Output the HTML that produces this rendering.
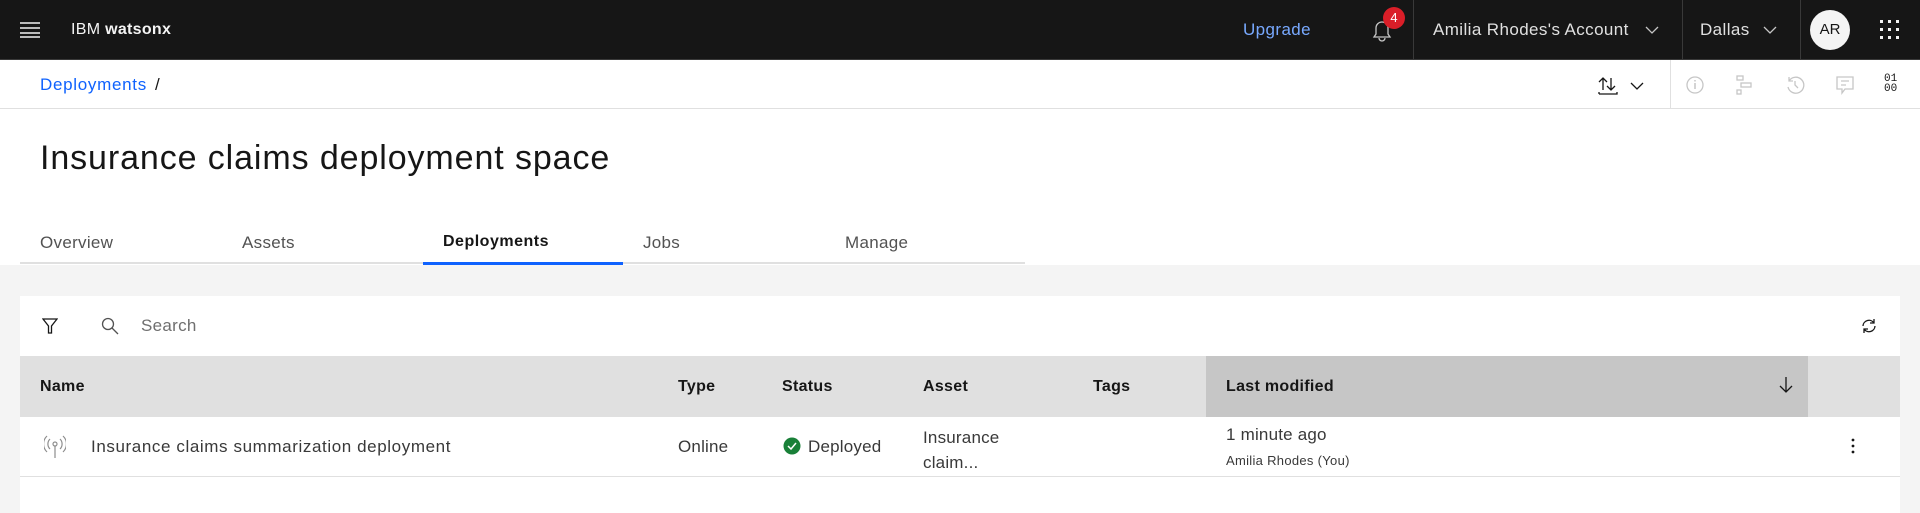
<!DOCTYPE html>
<html><head><meta charset="utf-8"><style>
*{box-sizing:border-box;margin:0;padding:0}
body{width:1920px;height:513px;overflow:hidden;background:#fff;font-family:"Liberation Sans",sans-serif;color:#161616;position:relative;letter-spacing:0.5px}
.a{position:absolute}
.top{left:0;top:0;width:1920px;height:60px;background:#161616;border-bottom:1px solid #393939}
.wt{color:#f4f4f4;font-size:16px}
.sep{width:1px;height:60px;background:#393939;top:0}
.hd{font-weight:bold;font-size:16px;top:378px;letter-spacing:0.3px}
.t{font-size:17px}
</style></head><body>
<div class="a top"></div>
<svg class="a" style="left:20px;top:20px" width="20" height="20" viewBox="0 0 20 20"><g stroke="#f4f4f4" stroke-width="1.5"><line x1="0" y1="3" x2="20" y2="3"/><line x1="0" y1="8" x2="20" y2="8"/><line x1="0" y1="13" x2="20" y2="13"/><line x1="0" y1="17" x2="20" y2="17"/></g></svg>
<div class="a wt" style="left:71px;top:21px;letter-spacing:0.3px">IBM <b>watsonx</b></div>
<div class="a" style="left:1243px;top:20px;color:#78a9ff;font-size:17px;letter-spacing:0.4px">Upgrade</div>
<svg class="a" style="left:1370px;top:18px" width="24" height="26" viewBox="0 0 24 26"><path d="M4 19 L6 16 V10 a6 6 0 0 1 12 0 V16 L20 19 Z M9 20 a3 3 0 0 0 6 0" fill="none" stroke="#c6c6c6" stroke-width="1.3"/></svg>
<div class="a" style="left:1383px;top:7px;width:22px;height:22px;border-radius:11px;background:#da1e28;color:#fff;font-size:13px;text-align:center;line-height:22px;letter-spacing:0">4</div>
<div class="a sep" style="left:1413px"></div>
<div class="a wt" style="left:1433px;top:20px;font-size:17px;color:#e0e0e0;letter-spacing:0.4px">Amilia Rhodes's Account</div>
<svg class="a" style="left:1645px;top:25px" width="14" height="10"><path d="M1 2 L7 8 L13 2" fill="none" stroke="#c6c6c6" stroke-width="1.3"/></svg>
<div class="a sep" style="left:1682px"></div>
<div class="a wt" style="left:1700px;top:20px;font-size:17px;color:#e0e0e0;letter-spacing:0.4px">Dallas</div>
<svg class="a" style="left:1763px;top:25px" width="14" height="10"><path d="M1 2 L7 8 L13 2" fill="none" stroke="#c6c6c6" stroke-width="1.3"/></svg>
<div class="a sep" style="left:1800px"></div>
<div class="a" style="left:1810px;top:10px;width:40px;height:40px;border-radius:20px;background:#f4f4f4;font-size:15px;text-align:center;line-height:40px;letter-spacing:0">AR</div>
<svg class="a" style="left:1880px;top:20px" width="20" height="20"><g fill="#f4f4f4"><rect x="0" y="0" width="3" height="3"/><rect x="8" y="0" width="3" height="3"/><rect x="16" y="0" width="3" height="3"/><rect x="0" y="8" width="3" height="3"/><rect x="8" y="8" width="3" height="3"/><rect x="16" y="8" width="3" height="3"/><rect x="0" y="16" width="3" height="3"/><rect x="8" y="16" width="3" height="3"/><rect x="16" y="16" width="3" height="3"/></g></svg>

<div class="a t" style="left:40px;top:75px;color:#0f62fe;letter-spacing:0.7px">Deployments</div>
<div class="a t" style="left:155px;top:75px">/</div>
<svg class="a" style="left:1597px;top:76px" width="22" height="20"><g fill="none" stroke="#161616" stroke-width="1.3"><path d="M6 14 V2 M2 6 L6 2 L10 6 M14 2 V14 M10 10 L14 14 L18 10 M2 18 H20 V16 M2 18 V16"/></g></svg>
<svg class="a" style="left:1630px;top:81px" width="14" height="10"><path d="M1 2 L7 8 L13 2" fill="none" stroke="#161616" stroke-width="1.3"/></svg>
<div class="a" style="left:1670px;top:60px;width:1px;height:49px;background:#e0e0e0"></div>
<svg class="a" style="left:1685px;top:75px" width="20" height="20"><circle cx="10" cy="10" r="8" fill="none" stroke="#c6c6c6" stroke-width="1.3"/><path d="M10 8 V14 M10 5 V6.5" stroke="#c6c6c6" stroke-width="1.5"/></svg>
<svg class="a" style="left:1735px;top:75px" width="20" height="20"><g fill="none" stroke="#c6c6c6" stroke-width="1.3"><rect x="2" y="1" width="6" height="4"/><rect x="6" y="8" width="10" height="4"/><rect x="2" y="15" width="4" height="4"/></g></svg>
<svg class="a" style="left:1785px;top:75px" width="20" height="20"><path d="M4 6 A8 8 0 1 1 3 12 M4 2 V6 H8 M10 6 V10 L13 13" fill="none" stroke="#c6c6c6" stroke-width="1.3"/></svg>
<svg class="a" style="left:1835px;top:75px" width="20" height="20"><path d="M2 2 H18 V14 H10 L7 18 V14 H2 Z M6 6 H14 M6 10 H11" fill="none" stroke="#c6c6c6" stroke-width="1.3"/></svg>
<div class="a" style="left:1884px;top:74px;font-size:11px;line-height:10px;font-family:'Liberation Mono',monospace;letter-spacing:0px">01<br>00</div>
<div class="a" style="left:0;top:108px;width:1920px;height:1px;background:#e0e0e0"></div>

<div class="a" style="left:40px;top:139px;font-size:34px;font-weight:300;letter-spacing:0.9px">Insurance claims deployment space</div>

<div class="a t" style="left:40px;top:233px;color:#525252;letter-spacing:0.3px">Overview</div>
<div class="a t" style="left:242px;top:233px;color:#525252;letter-spacing:0.3px">Assets</div>
<div class="a" style="left:443px;top:233px;font-size:16px;font-weight:bold;letter-spacing:0.5px">Deployments</div>
<div class="a t" style="left:643px;top:233px;color:#525252;letter-spacing:0.3px">Jobs</div>
<div class="a t" style="left:845px;top:233px;color:#525252;letter-spacing:0.3px">Manage</div>
<div class="a" style="left:20px;top:262px;width:1005px;height:2px;background:#e0e0e0"></div>
<div class="a" style="left:423px;top:262px;width:200px;height:3px;background:#0f62fe"></div>

<div class="a" style="left:0;top:265px;width:1920px;height:248px;background:#f4f4f4"></div>
<div class="a" style="left:20px;top:296px;width:1880px;height:217px;background:#fff"></div>
<svg class="a" style="left:42px;top:318px" width="16" height="16"><path d="M1 1 H15 L9.5 8 V15 H6.5 V8 Z" fill="none" stroke="#161616" stroke-width="1.3"/></svg>
<svg class="a" style="left:101px;top:317px" width="18" height="18"><circle cx="7" cy="7" r="5.5" fill="none" stroke="#525252" stroke-width="1.3"/><path d="M11 11 L17 17" stroke="#525252" stroke-width="1.3"/></svg>
<div class="a t" style="left:141px;top:316px;color:#6f6f6f;letter-spacing:0.3px">Search</div>
<svg class="a" style="left:1860px;top:317px" width="18" height="18"><path d="M3 9 A6 6 0 0 1 14 6 M15 9 A6 6 0 0 1 4 12 M14 2 V6 H10 M4 16 V12 H8" fill="none" stroke="#161616" stroke-width="1.3"/></svg>

<div class="a" style="left:20px;top:356px;width:1880px;height:61px;background:#e0e0e0"></div>
<div class="a" style="left:1206px;top:356px;width:602px;height:61px;background:#c6c6c6"></div>
<div class="a hd" style="left:40px">Name</div>
<div class="a hd" style="left:678px">Type</div>
<div class="a hd" style="left:782px">Status</div>
<div class="a hd" style="left:923px">Asset</div>
<div class="a hd" style="left:1093px">Tags</div>
<div class="a hd" style="left:1226px">Last modified</div>
<svg class="a" style="left:1778px;top:376px" width="16" height="18"><path d="M8 1 V16 M2 10 L8 16 L14 10" fill="none" stroke="#161616" stroke-width="1.3"/></svg>

<svg class="a" style="left:44px;top:435px" width="22" height="24"><g fill="none" stroke="#8d8d8d" stroke-width="1.2"><circle cx="11" cy="9" r="2"/><path d="M11 11 V23 M6 4 A7 7 0 0 0 6 14 M16 4 A7 7 0 0 1 16 14 M3 1 A11 11 0 0 0 3 17 M19 1 A11 11 0 0 1 19 17"/></g></svg>
<div class="a t" style="left:91px;top:437px;color:#393939;letter-spacing:0.6px">Insurance claims summarization deployment</div>
<div class="a t" style="left:678px;top:437px;color:#393939;letter-spacing:0.2px">Online</div>
<svg class="a" style="left:783px;top:437px" width="18" height="18"><circle cx="9" cy="9" r="8.5" fill="#198038"/><path d="M5 9 L8 12 L13 6" fill="none" stroke="#fff" stroke-width="1.5"/></svg>
<div class="a t" style="left:808px;top:437px;color:#393939;letter-spacing:0.2px">Deployed</div>
<div class="a t" style="left:923px;top:425px;line-height:25px;color:#393939;letter-spacing:0.2px">Insurance<br>claim...</div>
<div class="a t" style="left:1226px;top:425px;color:#393939;letter-spacing:0.2px">1 minute ago</div>
<div class="a" style="left:1226px;top:453px;font-size:13px;color:#393939;letter-spacing:0.3px">Amilia Rhodes (You)</div>
<svg class="a" style="left:1850px;top:437px" width="6" height="18"><g fill="#161616"><circle cx="3" cy="3" r="1.4"/><circle cx="3" cy="9" r="1.4"/><circle cx="3" cy="15" r="1.4"/></g></svg>
<div class="a" style="left:20px;top:476px;width:1880px;height:1px;background:#e0e0e0"></div>
</body></html>
